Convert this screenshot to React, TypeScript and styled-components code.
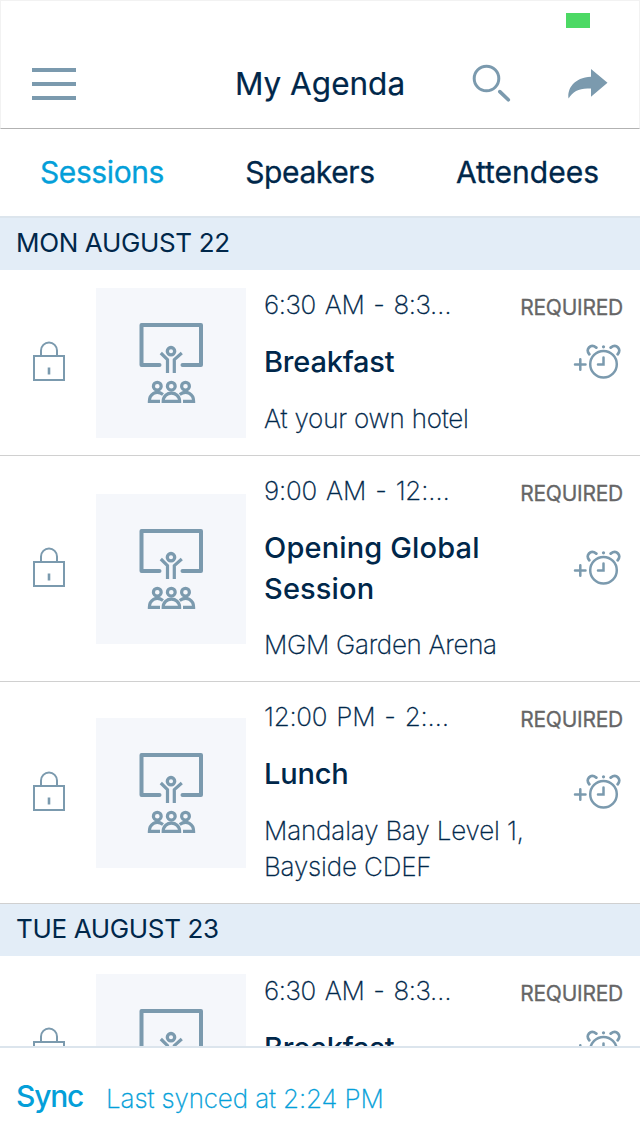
import React from 'react';
import styled, { createGlobalStyle, css } from 'styled-components';

const color = {
  navy: '#00274a',
  blue: '#049fd9',
  icon: '#7b9aae',
  band: '#e3edf7',
  edge: '#dce5ed',
};

const GlobalStyle = createGlobalStyle`
  * { box-sizing: border-box; }
  body {
    margin: 0;
    background: #fff;
    font-family: Inter, 'Liberation Sans', sans-serif;
    color: ${color.navy};
    overflow: hidden;
  }
`;

const Screen = styled.div`
  display: flex;
  flex-direction: column;
  width: 640px;
  height: 1136px;
  background: #fff;
  overflow: hidden;
`;

const Header = styled.header`
  flex: none;
  height: 129px;
  border: 1px solid #f2f2f2;
  border-bottom-color: #b2b2b2;
  display: flex;
  flex-direction: column;
`;

const StatusBar = styled.div`
  height: 39px;
  flex: none;
  display: flex;
  justify-content: flex-end;
  padding: 12px 49px 0 0;
`;

const Battery = styled.div`
  width: 24px;
  height: 15px;
  background: #4cd964;
`;

const NavBar = styled.div`
  flex: 1;
  display: grid;
  grid-template-columns: 168px 1fr 168px;
  align-items: center;
`;

const MenuButton = styled.button`
  display: flex;
  flex-direction: column;
  gap: 10px;
  width: 44px;
  margin: 0 0 0 31px;
  padding: 0;
  border: 0;
  background: none;
`;

const MenuBar = styled.span`
  height: 4px;
  background: ${color.icon};
`;

const Title = styled.h1`
  margin: 0;
  font-size: 31.5px;
  font-weight: 400;
  line-height: 40px;
  letter-spacing: 0;
  text-align: center;
  white-space: nowrap;
  -webkit-text-stroke: 0.2px currentColor;
`;

const Actions = styled.div`
  display: flex;
  justify-content: space-between;
  align-items: center;
  padding: 0 31px 0 1px;
`;

const Tabs = styled.nav`
  flex: none;
  height: 87px;
  display: flex;
  justify-content: space-between;
  align-items: center;
  padding: 0 41px 2px 40px;
`;

const Tab = styled.span<{ $active?: boolean; $spacing: number }>`
  font-size: 30px;
  line-height: 40px;
  font-weight: 400;
  letter-spacing: ${(p) => p.$spacing}px;
  color: ${(p) => (p.$active ? color.blue : color.navy)};
  -webkit-text-stroke: 0.3px currentColor;
`;

const List = styled.main`
  flex: 1;
  min-height: 0;
  overflow: hidden;
  border-top: 2px solid ${color.edge};
`;

const DayHeader = styled.h2`
  margin: 0;
  height: 52px;
  padding-left: 16px;
  background: ${color.band};
  font-size: 26px;
  font-weight: 400;
  line-height: 49px;
  letter-spacing: -0.35px;
`;

const Row = styled.article`
  display: grid;
  grid-template-columns: 96px 150px 1fr;
  align-items: center;
  border-bottom: 1px solid #d0d0d0;
`;

const LockCell = styled.div`
  display: flex;
  padding: 0 0 3px 32px;
`;

const Thumb = styled.div`
  width: 150px;
  height: 150px;
  background: #f5f7fb;
`;

const Details = styled.div`
  display: grid;
  grid-template-columns: 1fr 103px;
  align-self: stretch;
  padding: 17px 17px 18px 18px;
`;

const light = css`
  font-size: 26px;
  font-weight: 200;
  line-height: 36px;
  -webkit-text-stroke: 0.3px currentColor;
`;

const Info = styled.div`
  grid-area: 1 / 1 / 2 / 3;
  display: flex;
  flex-direction: column;
`;

const Time = styled.div<{ $spacing: number }>`
  ${light}
  letter-spacing: ${(p) => p.$spacing}px;
  word-spacing: 2px;
  white-space: nowrap;
`;

const Name = styled.h3<{ $spacing: number; $wrapped: boolean }>`
  margin: 18px 0 ${(p) => (p.$wrapped ? 18 : 19)}px;
  font-size: 29px;
  font-weight: 500;
  line-height: 41px;
  letter-spacing: ${(p) => p.$spacing}px;
  white-space: pre-line;
`;

const Place = styled.div<{ $spacing: number }>`
  ${light}
  letter-spacing: ${(p) => p.$spacing}px;
  white-space: pre-line;
`;

const Required = styled.span`
  grid-area: 1 / 2;
  justify-self: end;
  align-self: start;
  font-size: 21px;
  font-weight: 400;
  line-height: 41px;
  letter-spacing: -0.25px;
  color: #666;
  -webkit-text-stroke: 0.3px #666;
`;

const AlarmCell = styled.div`
  grid-area: 1 / 2;
  place-self: center end;
  display: flex;
  padding: 0 2px 1px 0;
`;

const Footer = styled.footer`
  flex: none;
  height: 90px;
  border-top: 2px solid ${color.edge};
  display: flex;
  align-items: flex-start;
  padding: 28px 0 0 16px;
  color: ${color.blue};
  background: #fff;
`;

const Sync = styled.span`
  width: 90px;
  font-size: 30px;
  line-height: 40px;
  font-weight: 500;
  letter-spacing: -1.2px;
`;

const Synced = styled.span`
  ${light}
  padding-top: 3px;
  line-height: 40px;
  letter-spacing: -0.12px;
`;

const SearchIcon = () => (
  <svg width="40" height="40" viewBox="472 64 40 40" fill="none" stroke={color.icon}>
    <circle cx="486.5" cy="78.5" r="12.3" strokeWidth="3" />
    <path d="M499.8 91.6 508.3 99.8" strokeWidth="3.6" strokeLinecap="round" />
  </svg>
);

const ShareIcon = () => (
  <svg width="42" height="32" viewBox="566 68 42 32" fill={color.icon}>
    <path d="M591 69 607.5 82.7 591 96.8V88.6C580 87.6 573 91 568.6 98.5 567 89 574 77.5 591 76.8Z" />
  </svg>
);

const LockIcon = () => (
  <svg width="34" height="40" viewBox="32 341 34 40" fill="none" stroke={color.icon} strokeWidth="2">
    <path d="M34 356H64V380H34Z" />
    <path d="M41 356V350.5A8 8 0 0 1 57 350.5V356" />
    <path d="M49 367.5V374.5" strokeWidth="2.6" />
  </svg>
);

const SessionIcon = () => (
  <svg width="150" height="150" viewBox="96 288 150 150" fill="none" stroke={color.icon}>
    <path d="M159.5 365H141.5V325H201V365H182.5" strokeWidth="4" strokeLinecap="round" strokeLinejoin="round" />
    <circle cx="171" cy="351.2" r="3.7" strokeWidth="3.3" />
    <path d="M160.8 353 167.5 359.6V373M181.8 353 174.3 359.6V373" strokeWidth="3.2" />
    <g strokeWidth="3.2">
      <circle cx="157.3" cy="386.2" r="3.9" />
      <circle cx="171.3" cy="386.2" r="3.9" />
      <circle cx="185.5" cy="386.2" r="3.9" />
      <path d="M163 394.5C156 389.5 149.4 394.5 149.4 401.3H160" />
      <path d="M179.7 394.5C187 389.5 193.6 394.5 193.6 401.3H183" />
      <path d="M163.2 401.3C163.2 390.5 179.6 390.5 179.6 401.3Z" />
    </g>
  </svg>
);

const AlarmIcon = () => (
  <svg width="48" height="36" viewBox="573 344 48 36" fill="none" stroke={color.icon} strokeWidth="2.5" strokeLinecap="round">
    <circle cx="603.5" cy="364.3" r="13.3" />
    <path d="M603.5 357.5V364.5H598M575 364.5H585.5M580.3 359.3V369.8" />
    <path d="M589.3 354.2C585 349.5 590.5 343 596.3 347.6M617.7 354.2C622 349.5 616.5 343 610.7 347.6" strokeWidth="2.8" />
    <circle cx="603.5" cy="346.8" r="1.6" fill={color.icon} stroke="none" />
  </svg>
);

interface Session {
  time: string;
  timeSpacing: number;
  name: string;
  nameSpacing: number;
  place: string;
  placeSpacing: number;
}

const breakfast: Session = {
  time: '6:30 AM - 8:3…', timeSpacing: -0.4,
  name: 'Breakfast', nameSpacing: -0.2,
  place: 'At your own hotel', placeSpacing: -0.2,
};

const days: { label: string; sessions: Session[] }[] = [
  {
    label: 'MON AUGUST 22',
    sessions: [
      breakfast,
      {
        time: '9:00 AM - 12:…', timeSpacing: -0.2,
        name: 'Opening Global\nSession', nameSpacing: 0.15,
        place: 'MGM Garden Arena', placeSpacing: -0.3,
      },
      {
        time: '12:00 PM - 2:…', timeSpacing: -0.25,
        name: 'Lunch', nameSpacing: -0.2,
        place: 'Mandalay Bay Level 1,\nBayside CDEF', placeSpacing: -0.15,
      },
    ],
  },
  { label: 'TUE AUGUST 23', sessions: [breakfast] },
];

const SessionRow = ({ session }: { session: Session }) => (
  <Row>
    <LockCell><LockIcon /></LockCell>
    <Thumb><SessionIcon /></Thumb>
    <Details>
      <Info>
        <Time $spacing={session.timeSpacing}>{session.time}</Time>
        <Name $spacing={session.nameSpacing} $wrapped={session.name.includes('\n')}>{session.name}</Name>
        <Place $spacing={session.placeSpacing}>{session.place}</Place>
      </Info>
      <Required>REQUIRED</Required>
      <AlarmCell><AlarmIcon /></AlarmCell>
    </Details>
  </Row>
);

export default function App() {
  return (
    <>
      <GlobalStyle />
      <Screen>
        <Header>
          <StatusBar><Battery /></StatusBar>
          <NavBar>
            <MenuButton aria-label="Menu"><MenuBar /><MenuBar /><MenuBar /></MenuButton>
            <Title>My Agenda</Title>
            <Actions><SearchIcon /><ShareIcon /></Actions>
          </NavBar>
        </Header>
        <Tabs>
          <Tab $active $spacing={-0.4}>Sessions</Tab>
          <Tab $spacing={-0.4}>Speakers</Tab>
          <Tab $spacing={0}>Attendees</Tab>
        </Tabs>
        <List>
          {days.map((day) => (
            <section key={day.label}>
              <DayHeader>{day.label}</DayHeader>
              {day.sessions.map((s) => <SessionRow key={s.name} session={s} />)}
            </section>
          ))}
        </List>
        <Footer>
          <Sync>Sync</Sync>
          <Synced>Last synced at 2:24 PM</Synced>
        </Footer>
      </Screen>
    </>
  );
}
